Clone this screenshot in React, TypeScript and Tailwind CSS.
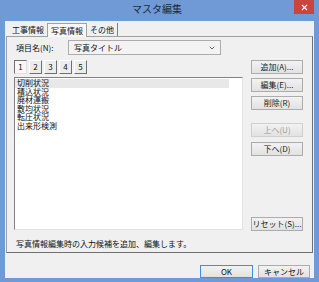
import { ChevronDown, X } from 'lucide-react';

const items = ['切削状況', '積込状況', '廃材運搬', '敷均状況', '転圧状況', '出来形検測'];

function Btn({ label, disabled, className = '' }: { label: string; disabled?: boolean; className?: string }) {
  return (
    <div
      className={`flex h-[14px] w-[52px] items-center justify-center border bg-gradient-to-b from-[#f2f2f2] to-[#e2e2e2] text-[8px] leading-none ${
        disabled ? 'border-[#d0d0d0] text-[#a0a0a0]' : 'border-[#acacac] text-[#222]'
      } ${className}`}
    >
      {label}
    </div>
  );
}

export default function App() {
  return (
    <div
      className="flex h-[282px] w-[319px] flex-col bg-[#6f9ad6] text-[#111]"
      style={{ fontFamily: '"Noto Sans CJK JP", "Noto Sans", sans-serif' }}
    >
      {/* Title bar */}
      <div className="flex h-[21px] items-start">
        <div className="flex-1 pt-[4px] pl-[20px] text-center text-[10px] leading-none text-[#1d2a3a]">マスタ編集</div>
        <div className="mr-[5px] flex h-[14px] w-[20px] items-center justify-center bg-[#c8463d]">
          <X className="h-[9px] w-[9px] text-white" strokeWidth={3} />
        </div>
      </div>

      {/* Client area */}
      <div className="mx-[5px] flex h-[257px] flex-col bg-[#f0f0f0] text-[8px] leading-none">
        {/* Tabs */}
        <div className="flex h-[15px] items-end pl-[5px] pt-[2px]">
          <div className="flex h-[13px] items-center px-[3px] pl-[2px]">工事情報</div>
          <div className="relative z-10 -mb-[1px] flex h-[14px] items-center border border-b-0 border-[#a0a0a0] bg-[#f7f7f7] px-[3px]">写真情報</div>
          <div className="flex h-[13px] items-center border-r border-[#808080] px-[3px]">その他</div>
        </div>

        {/* Panel */}
        <div className="mx-[1px] flex h-[217px] flex-col border border-[#a0a0a0] border-r-[#707070] border-b-[#707070] bg-[#f0f0f0]">
          <div className="flex h-[18px] items-center pl-[9px] pt-[3px]">
            <span className="w-[52px]">項目名(N):</span>
            <div className="flex h-[15px] w-[153px] items-center justify-between border border-[#acacac] bg-[#f3f3f3] pl-[5px] pr-[4px]">
              <span>写真タイトル</span>
              <ChevronDown className="h-[8px] w-[8px] text-[#444]" strokeWidth={2.5} />
            </div>
          </div>

          <div className="flex flex-1 pt-[5px]">
            {/* Left column */}
            <div className="ml-[7px] flex w-[229px] flex-col">
              <div className="flex gap-[2px]">
                {['1', '2', '3', '4', '5'].map((n, i) => (
                  <div
                    key={n}
                    className={`flex h-[14px] w-[13px] items-center justify-center border ${
                      i === 0
                        ? 'border-[#707070] border-r-[#e0e0e0] border-b-[#e0e0e0] bg-[#f7f7f7]'
                        : 'border-[#ffffff] border-r-[#707070] border-b-[#707070] bg-[#ececec]'
                    }`}
                  >
                    {n}
                  </div>
                ))}
              </div>
              <div className="mt-[3px] h-[153px] border border-[#828282] border-r-[#e3e3e3] border-b-[#e3e3e3] bg-white pt-[1px]">
                {items.map((t, i) => (
                  <div
                    key={t}
                    className={`h-[8.6px] w-[214px] pl-[2px] text-[8px] leading-[8.6px] ${i === 0 ? 'bg-[#e8e8e8]' : ''}`}
                  >
                    {t}
                  </div>
                ))}
              </div>
            </div>

            {/* Right column */}
            <div className="ml-[8px] flex flex-col">
              <Btn label="追加(A)..." />
              <Btn label="編集(E)..." className="mt-[4px]" />
              <Btn label="削除(R)" className="mt-[4px]" />
              <Btn label="上へ(U)" disabled className="mt-[13px]" />
              <Btn label="下へ(D)" className="mt-[5px]" />
              <Btn label="リセット(S)..." className="mt-[61px]" />
            </div>
          </div>

          <div className="h-[16px] pl-[9px] pt-[4px]">写真情報編集時の入力候補を追加、編集します。</div>
        </div>

        {/* Bottom buttons */}
        <div className="flex justify-end gap-[5px] pr-[4px] pt-[12px]">
          <div className="flex h-[13px] w-[53px] items-center justify-center border border-[#3c8fe0] bg-gradient-to-b from-[#f2f2f2] to-[#e2e2e2]">OK</div>
          <div className="flex h-[13px] w-[52px] items-center justify-center border border-[#acacac] bg-gradient-to-b from-[#f2f2f2] to-[#e2e2e2]">キャンセル</div>
        </div>
      </div>
    </div>
  );
}
